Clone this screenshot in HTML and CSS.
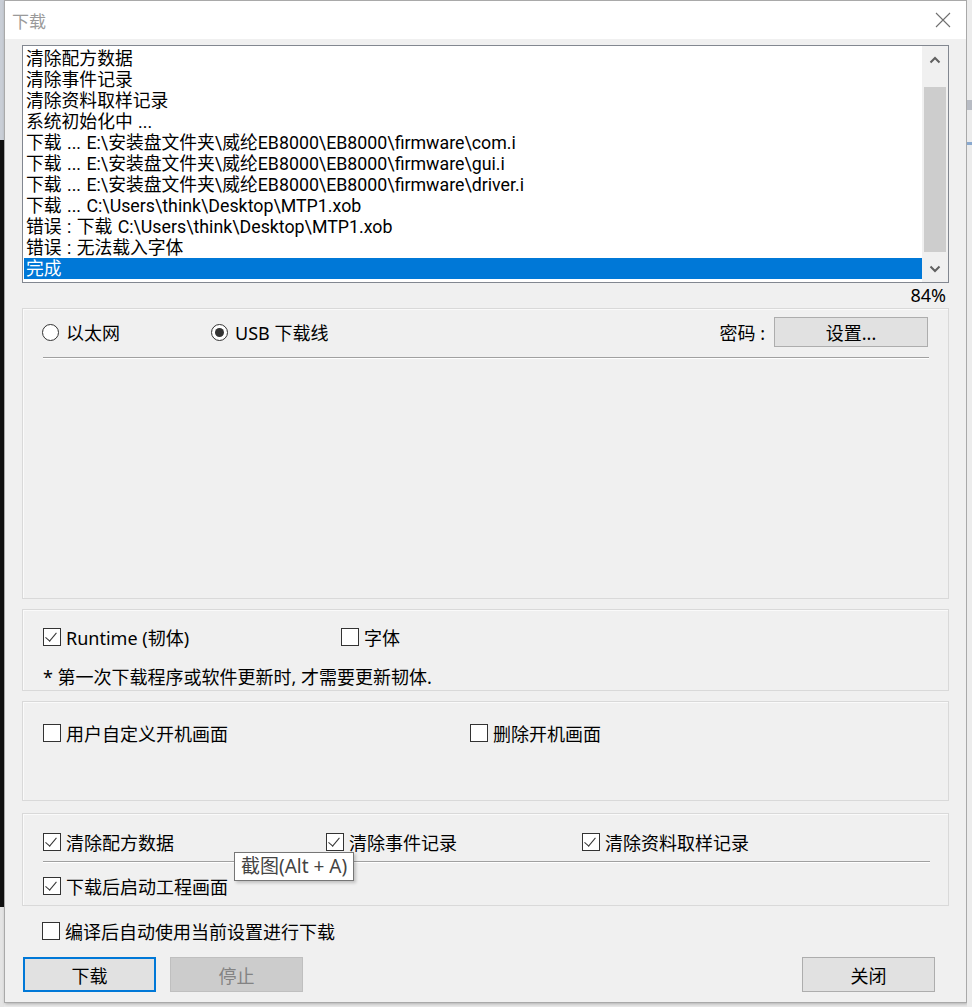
FILE: index.html
```html
<!DOCTYPE html>
<html lang="zh-CN">

<head>
    <meta charset="UTF-8">
    <meta name="viewport" content="width=device-width, initial-scale=1.0">
    <title>下载</title>
    <link rel="stylesheet" href="styles.css">
</head>

<body>
    <div class="desk-left">
        <div class="desk-top"></div>
        <div class="desk-mid"></div>
        <div class="desk-bottom"></div>
    </div>

    <div class="window">
        <div class="titlebar">
            <span class="title">下载</span>
            <svg class="close-icon" width="16" height="16" viewBox="0 0 16 16">
                <path d="M1 1 L15 15 M15 1 L1 15" stroke="#6f6f6f" stroke-width="1.1" fill="none" />
            </svg>
        </div>

        <div class="client">
            <div class="listbox">
                <div class="lines">
                    <div class="line">清除配方数据</div>
                    <div class="line">清除事件记录</div>
                    <div class="line">清除资料取样记录</div>
                    <div class="line">系统初始化中 ...</div>
                    <div class="line">下载 ... E:\安装盘文件夹\威纶EB8000\EB8000\firmware\com.i</div>
                    <div class="line">下载 ... E:\安装盘文件夹\威纶EB8000\EB8000\firmware\gui.i</div>
                    <div class="line">下载 ... E:\安装盘文件夹\威纶EB8000\EB8000\firmware\driver.i</div>
                    <div class="line">下载 ... C:\Users\think\Desktop\MTP1.xob</div>
                    <div class="line">错误 : 下载 C:\Users\think\Desktop\MTP1.xob</div>
                    <div class="line">错误 : 无法载入字体</div>
                    <div class="line selected">完成</div>
                </div>
                <div class="scrollbar">
                    <div class="scroll-btn">
                        <svg width="12" height="8" viewBox="0 0 12 8">
                            <path d="M1.5 6.5 L6 2 L10.5 6.5" stroke="#606060" stroke-width="2" fill="none" />
                        </svg>
                    </div>
                    <div class="scroll-track">
                        <div class="scroll-thumb"></div>
                    </div>
                    <div class="scroll-btn">
                        <svg width="12" height="8" viewBox="0 0 12 8">
                            <path d="M1.5 1.5 L6 6 L10.5 1.5" stroke="#606060" stroke-width="2" fill="none" />
                        </svg>
                    </div>
                </div>
            </div>

            <div class="percent">84%</div>

            <div class="group group-conn">
                <div class="conn-row">
                    <label class="radio-item first"><span class="radio"></span>以太网</label>
                    <label class="radio-item"><span class="radio checked"></span>USB 下载线</label>
                    <span class="pwd-label">密码 :</span>
                    <button class="btn btn-setup">设置...</button>
                </div>
                <div class="divider conn-divider"></div>
            </div>

            <div class="group group-runtime">
                <div class="check-row cols-runtime">
                    <label class="check-item"><span class="check checked"></span>Runtime (韧体)</label>
                    <label class="check-item"><span class="check"></span>字体</label>
                </div>
                <div class="note">* 第一次下载程序或软件更新时, 才需要更新韧体.</div>
            </div>

            <div class="group group-boot">
                <div class="check-row cols-boot">
                    <label class="check-item"><span class="check"></span>用户自定义开机画面</label>
                    <label class="check-item"><span class="check"></span>删除开机画面</label>
                </div>
            </div>

            <div class="group group-clear">
                <div class="check-row cols-clear">
                    <label class="check-item"><span class="check checked"></span>清除配方数据</label>
                    <label class="check-item"><span class="check checked"></span>清除事件记录</label>
                    <label class="check-item"><span class="check checked"></span>清除资料取样记录</label>
                </div>
                <div class="divider clear-divider"></div>
                <div class="check-row second">
                    <label class="check-item"><span class="check checked"></span>下载后启动工程画面</label>
                </div>
                <div class="tooltip">截图(Alt + A)</div>
            </div>

            <div class="check-row standalone">
                <label class="check-item"><span class="check"></span>编译后自动使用当前设置进行下载</label>
            </div>

            <div class="button-row">
                <button class="btn btn-default">下载</button>
                <button class="btn btn-disabled">停止</button>
                <button class="btn btn-close">关闭</button>
            </div>
        </div>
    </div>

    <div class="desk-right">
        <div class="desk-band"></div>
        <div class="desk-line"></div>
    </div>
</body>

</html>
```

FILE: styles.css
```css
* {
    margin: 0;
    padding: 0;
    box-sizing: border-box;
}

body {
    font-family: 'Noto Sans', 'Noto Sans CJK SC', sans-serif;
    font-size: 18px;
    color: #000;
    width: 972px;
    height: 1007px;
    overflow: hidden;
    display: flex;
    background: #e9e9e9;
}

/* desktop behind the dialog */
.desk-left {
    width: 4px;
    display: flex;
    flex-direction: column;
}

.desk-top {
    height: 140px;
    background: #c9ced6;
}

.desk-mid {
    flex: 1;
    background: #111;
}

.desk-bottom {
    height: 100px;
    background: #e4e4e4;
}

.desk-right {
    flex: 1;
    background: #ececec;
    padding-top: 100px;
}

.desk-band {
    height: 10px;
    background: #b8bcc4;
}

.desk-line {
    margin-top: 32px;
    height: 3px;
    background: #8aa9cf;
}

/* dialog */
.window {
    width: 963px;
    height: 1003px;
    border: 1px solid #a9a9a9;
    background: #f0f0f0;
    display: flex;
    flex-direction: column;
    box-shadow: 1px 1px 3px rgba(0, 0, 0, 0.25);
}

.titlebar {
    height: 38px;
    background: #fff;
    display: flex;
    align-items: center;
    padding: 0 15px 0 7px;
}

.title {
    color: #9a9a9a;
    font-size: 17px;
    flex: 1;
}

.client {
    position: relative;
    flex: 1;
    padding: 6px 17px 0;
}

/* log list */
.listbox {
    height: 238px;
    background: #fff;
    border: 1px solid #828790;
    display: flex;
}

.lines {
    flex: 1;
    padding: 2px 0 0 1px;
    font-family: Roboto, 'Noto Sans CJK SC', sans-serif;
}

.line {
    height: 21px;
    line-height: 21px;
    font-size: 17.8px;
    padding-left: 2px;
    white-space: nowrap;
    word-spacing: 1px;
}

.line.selected {
    background: #0078d7;
    color: #fff;
}

.scrollbar {
    width: 26px;
    background: #f0f0f0;
    display: flex;
    flex-direction: column;
}

.scroll-btn {
    height: 27px;
    display: flex;
    align-items: center;
    justify-content: center;
}

.scroll-track {
    flex: 1;
    padding: 14px 2px 0;
}

.scroll-thumb {
    height: 165px;
    background: #cdcdcd;
}

.percent {
    height: 25px;
    line-height: 25px;
    text-align: right;
    padding-right: 3px;
}

/* group boxes */
.group {
    border: 1px solid #d9d9d9;
    box-shadow: inset 1px 1px 0 #fafafa;
}

.group-conn {
    height: 291px;
    padding: 8px 19px 0;
}

.conn-row {
    height: 30px;
    display: flex;
    align-items: center;
}

.radio-item {
    display: flex;
    align-items: center;
    gap: 7px;
}

.radio-item.first {
    width: 169px;
}

.radio {
    width: 17px;
    height: 17px;
    border: 1px solid #333;
    border-radius: 50%;
    background: #fff;
    display: flex;
    align-items: center;
    justify-content: center;
}

.radio.checked::after {
    content: '';
    width: 9px;
    height: 9px;
    border-radius: 50%;
    background: #333;
}

.pwd-label {
    margin-left: auto;
    margin-right: 9px;
}

.divider {
    height: 2px;
    border-top: 1px solid #a0a0a0;
    border-bottom: 1px solid #fff;
}

.conn-divider {
    margin: 10px 0 0 1px;
}

.check-row {
    height: 24px;
    display: grid;
    align-items: center;
}

.check-item {
    display: flex;
    align-items: center;
    gap: 5px;
    white-space: nowrap;
}

.check {
    width: 18px;
    height: 18px;
    border: 1px solid #333;
    background: #fff;
    position: relative;
}

.check.checked::after {
    content: '';
    position: absolute;
    left: 4px;
    top: 1px;
    width: 5px;
    height: 10px;
    border-right: 1.5px solid #333;
    border-bottom: 1.5px solid #333;
    transform: rotate(40deg);
}

.group-runtime {
    height: 82px;
    margin-top: 10px;
    padding: 14px 20px 0;
}

.cols-runtime {
    grid-template-columns: 298px auto;
}

.note {
    margin-top: 18px;
    height: 22px;
    line-height: 22px;
    font-size: 18px;
}

.group-boot {
    height: 100px;
    margin-top: 10px;
    padding: 18px 20px 0;
}

.cols-boot {
    grid-template-columns: 427px auto;
}

.group-clear {
    position: relative;
    height: 93px;
    margin-top: 12px;
    padding: 15px 18px 0 20px;
}

.cols-clear {
    grid-template-columns: 283px 256px auto;
}

.clear-divider {
    margin-top: 8px;
}

.check-row.second {
    margin-top: 10px;
}

.check-row.standalone {
    margin: 12px 0 0 20px;
}

.tooltip {
    position: absolute;
    left: 211px;
    top: 38px;
    height: 29px;
    padding: 0 6px;
    line-height: 27px;
    background: #fff;
    border: 1px solid #767676;
    color: #444;
    font-size: 19px;
    box-shadow: 2px 2px 3px rgba(0, 0, 0, 0.2);
    white-space: nowrap;
}

/* buttons */
.button-row {
    display: flex;
    margin-top: 15px;
    padding-left: 1px;
}

.btn {
    font-family: inherit;
    font-size: 18px;
    height: 35px;
    width: 133px;
    background: #e1e1e1;
    border: 1px solid #adadad;
    color: #000;
}

.btn-setup {
    width: 154px;
    height: 30px;
    margin-right: 1px;
}

.btn-default {
    border: 2px solid #0078d7;
}

.btn-disabled {
    margin-left: 14px;
    background: #cccccc;
    border-color: #bfbfbf;
    color: #838383;
}

.btn-close {
    margin-left: auto;
    margin-right: 14px;
}
```
